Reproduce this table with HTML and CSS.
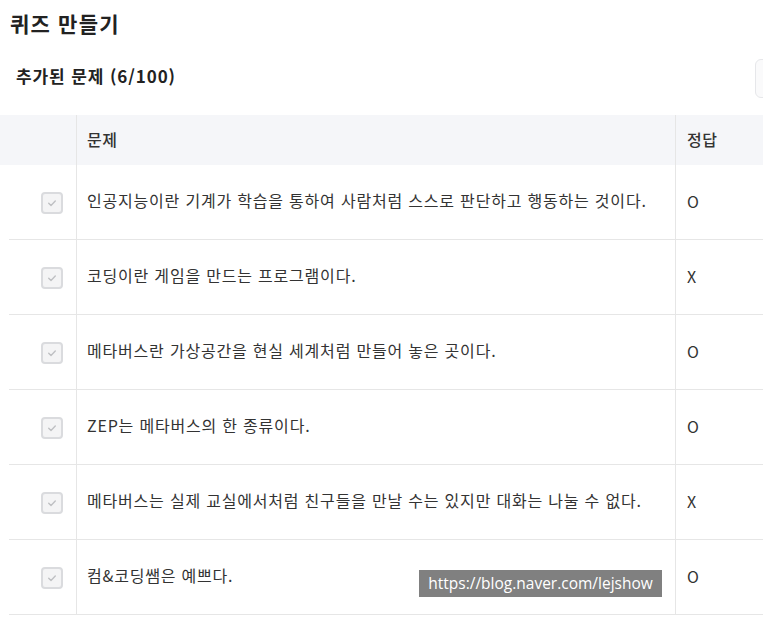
FILE: index.html
```html
<!DOCTYPE html>
<html lang="ko">
<head>
<meta charset="utf-8">
<link rel="stylesheet" href="styles.css">
</head>
<body>
<div class="page">
  <h1 class="title">퀴즈 만들기</h1>
  <div class="bar">
    <h2 class="count">추가된 문제 (6/100)</h2>
    <button class="btn" type="button"></button>
  </div>
  <div class="table">
    <div class="row head">
      <div class="c-check"></div>
      <div class="c-q">문제</div>
      <div class="c-a">정답</div>
    </div>
    <div class="row">
      <div class="c-check"><span class="cb"><svg viewBox="0 0 22 22"><path d="M7 11.2l2.8 2.8 5.2-5.4"/></svg></span></div>
      <div class="c-q">인공지능이란 기계가 학습을 통하여 사람처럼 스스로 판단하고 행동하는 것이다.</div>
      <div class="c-a">O</div>
    </div>
    <div class="row">
      <div class="c-check"><span class="cb"><svg viewBox="0 0 22 22"><path d="M7 11.2l2.8 2.8 5.2-5.4"/></svg></span></div>
      <div class="c-q">코딩이란 게임을 만드는 프로그램이다.</div>
      <div class="c-a">X</div>
    </div>
    <div class="row">
      <div class="c-check"><span class="cb"><svg viewBox="0 0 22 22"><path d="M7 11.2l2.8 2.8 5.2-5.4"/></svg></span></div>
      <div class="c-q">메타버스란 가상공간을 현실 세계처럼 만들어 놓은 곳이다.</div>
      <div class="c-a">O</div>
    </div>
    <div class="row">
      <div class="c-check"><span class="cb"><svg viewBox="0 0 22 22"><path d="M7 11.2l2.8 2.8 5.2-5.4"/></svg></span></div>
      <div class="c-q">ZEP는 메타버스의 한 종류이다.</div>
      <div class="c-a">O</div>
    </div>
    <div class="row">
      <div class="c-check"><span class="cb"><svg viewBox="0 0 22 22"><path d="M7 11.2l2.8 2.8 5.2-5.4"/></svg></span></div>
      <div class="c-q">메타버스는 실제 교실에서처럼 친구들을 만날 수는 있지만 대화는 나눌 수 없다.</div>
      <div class="c-a">X</div>
    </div>
    <div class="row">
      <div class="c-check"><span class="cb"><svg viewBox="0 0 22 22"><path d="M7 11.2l2.8 2.8 5.2-5.4"/></svg></span></div>
      <div class="c-q">컴&amp;코딩쌤은 예쁘다.</div>
      <div class="c-a">O</div>
    </div>
  </div>
  <div class="watermark">https://blog.naver.com/lejshow</div>
</div>
</body>
</html>
```
FILE: styles.css
```css
html, body {
  margin: 0;
  padding: 0;
  overflow: hidden;
  background: #fff;
}
.page {
  position: relative;
  width: 763px;
  height: 618px;
  overflow: hidden;
  font-family: "Noto Sans CJK KR", "Noto Sans", sans-serif;
  color: #333;
}
.title {
  margin: 0;
  padding: 6px 0 0 10px;
  height: 38px;
  box-sizing: border-box;
  font-size: 21px;
  font-weight: 700;
  letter-spacing: 1.2px;
  line-height: 34px;
  color: #222;
}
.bar {
  display: flex;
  align-items: center;
  justify-content: space-between;
  height: 58px;
  margin-top: 1px;
  padding-left: 16px;
}
.count {
  margin: 16px 0 0 0;
  font-size: 17px;
  font-weight: 700;
  color: #222;
  letter-spacing: 0.9px;
  line-height: 24px;
}
.btn {
  flex-shrink: 0;
  width: 60px;
  height: 39px;
  margin-top: 20px;
  margin-right: -52px;
  border: 1px solid #e6e7ea;
  border-radius: 6px;
  background: #fafafb;
}
.table {
  margin-top: 18px;
}
.row {
  display: grid;
  grid-template-columns: 77px 599px 87px;
  height: 75px;
  background: linear-gradient(#e6e6e6, #e6e6e6) 9px 100% / calc(100% - 9px) 1px no-repeat;
}
.row.head {
  height: 50px;
  background: #f5f6f9;
}
.c-check {
  display: flex;
  align-items: center;
  justify-content: flex-end;
  padding-right: 13px;
  border-right: 1px solid #e6e6e6;
}
.c-q {
  display: flex;
  align-items: center;
  padding-left: 10px;
  padding-bottom: 5px;
  border-right: 1px solid #e6e6e6;
  font-size: 16px;
  letter-spacing: 0.8px;
  color: #333;
  white-space: nowrap;
}
.c-a {
  display: flex;
  align-items: center;
  padding-left: 11px;
  padding-bottom: 4px;
  font-size: 16px;
  color: #333;
}
.head .c-q, .head .c-a {
  font-size: 16px;
  font-weight: 500;
  letter-spacing: 0.6px;
  padding-bottom: 2px;
  color: #333;
}
.cb {
  display: block;
  width: 22px;
  height: 22px;
  box-sizing: border-box;
  border: 2px solid #dadbde;
  border-radius: 4px;
  background: #f4f4f5;
}
.cb svg {
  display: block;
  width: 18px;
  height: 18px;
  fill: none;
  stroke: #bfc0c3;
  stroke-width: 1.7;
  stroke-linecap: round;
  stroke-linejoin: round;
}
.watermark {
  position: absolute;
  left: 419px;
  top: 570px;
  width: 243px;
  height: 27px;
  background: #808080;
  color: #fff;
  font-family: "Open Sans", "Noto Sans", sans-serif;
  font-size: 15.5px;
  line-height: 27px;
  text-align: center;
}
```
